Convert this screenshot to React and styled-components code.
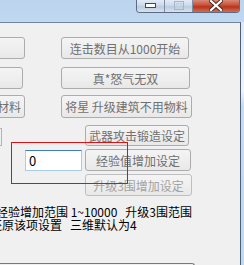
import React from 'react';
import styled, { createGlobalStyle } from 'styled-components';

const Global = createGlobalStyle`
  html, body {
    margin: 0;
    padding: 0;
    overflow: hidden;
  }
  body {
    font-family: "Noto Sans CJK SC", "Microsoft YaHei", sans-serif;
    font-size: 12px;
  }
`;

const Desktop = styled.div`
  position: relative;
  width: 244px;
  height: 265px;
  overflow: hidden;
  background: #c4dcf4;
`;

const Window = styled.div`
  display: flex;
  flex-direction: column;
  width: 364px;
  height: 300px;
  margin-left: -120px;
  background: linear-gradient(180deg, #bcd5ef 0%, #cfe3f7 40%, #c2dbf3 100%);
`;

const TitleBar = styled.div`
  display: flex;
  justify-content: flex-end;
  align-items: flex-start;
  height: 22px;
  padding-right: 4px;
  flex-shrink: 0;
`;

const Caption = styled.div`
  display: flex;
  height: 13px;
  margin-top: -1px;
  border: 1px solid #5b6c82;
  border-top: none;
  border-radius: 0 0 4px 4px;
  overflow: hidden;
`;

const CapBtn = styled.div`
  display: flex;
  align-items: center;
  justify-content: center;
  width: ${p => p.$w}px;
  height: 100%;
  background: ${p => p.$close
    ? 'linear-gradient(180deg, #dc9483 0%, #c9533d 45%, #b8341b 60%, #d06f56 100%)'
    : 'linear-gradient(180deg, #e6eef8 0%, #cfdcec 45%, #bccbde 60%, #d6e2ef 100%)'};
  border-left: ${p => (p.$first ? 'none' : '1px solid #7d8ea4')};
`;

const Frame = styled.div`
  display: flex;
  flex: 1;
`;

const Client = styled.div`
  flex: 1;
  background: #f0f0f0;
  border-top: 1px solid #71849b;
  border-right: 1px solid #4f6076;
  padding-top: 14px;
  display: flex;
  flex-direction: column;
`;

const SideFrame = styled.div`
  width: 3px;
  background: linear-gradient(180deg, #dce9f6 0%, #eef4fa 25%, #c4dcf3 30%, #bcd8f2 100%);
`;

const Row = styled.div`
  display: flex;
  align-items: center;
  height: ${p => p.$h}px;
  margin-top: ${p => p.$mt || 0}px;
`;

const LeftCell = styled.div`
  display: flex;
  justify-content: flex-end;
  align-items: center;
  width: ${p => p.$w}px;
  padding-right: ${p => p.$pr}px;
  box-sizing: border-box;
  height: 100%;
`;

const Button = styled.div`
  display: flex;
  align-items: center;
  justify-content: ${p => (p.$right ? 'flex-end' : 'center')};
  box-sizing: border-box;
  width: ${p => p.$w}px;
  height: 100%;
  padding: 0 3px;
  border: 1px solid ${p => (p.$disabled ? '#bfbfbf' : '#acacac')};
  border-radius: 3px;
  background: linear-gradient(180deg, #f4f4f4 0%, #efefef 50%, #e8e8e8 100%);
  color: ${p => (p.$disabled ? '#a3a3a3' : '#707070')};
  font-size: 12px;
  white-space: nowrap;
  overflow: hidden;
`;

const Stub = styled.div`
  width: 40px;
  height: 16px;
  border: 1px solid #b4b4b4;
  border-left: none;
  align-self: flex-end;
`;

const Input = styled.div`
  display: flex;
  align-items: center;
  box-sizing: border-box;
  width: 57px;
  height: 21px;
  padding-left: 3px;
  background: #fff;
  border: 1px solid #a9cce8;
  border-top-color: #3f7fb5;
  color: #000;
  font-size: 13px;
`;

const Notes = styled.div`
  margin-top: 9px;
  color: #000;
  font-size: 12px;
  line-height: 13px;
  white-space: nowrap;
`;

const NoteLine = styled.div`
  padding-left: ${p => p.$pl}px;
  white-space: pre;
`;

const BottomBox = styled.div`
  margin-top: 32px;
  width: 314px;
  height: 20px;
  border: 1px solid #7a7a7a;
  border-left: none;
  border-bottom: none;
  border-radius: 0 3px 0 0;
`;

const Highlight = styled.div`
  position: absolute;
  left: 11px;
  top: 142px;
  width: 115px;
  height: 40px;
  border: 1px solid #e01010;
  pointer-events: none;
`;

export default function App() {
  return (
    <>
      <Global />
      <Desktop>
        <Window>
          <TitleBar>
            <Caption>
              <CapBtn $w={27} $first>
                <svg width="11" height="5" viewBox="0 0 11 5">
                  <rect x="0.5" y="0.5" width="10" height="4" fill="#fff" stroke="#3a4a5e" />
                </svg>
              </CapBtn>
              <CapBtn $w={27}>
                <svg width="10" height="9" viewBox="0 0 10 9">
                  <rect x="0.5" y="0.5" width="9" height="8" fill="none" stroke="#a7b4c5" />
                  <rect x="2.5" y="2.5" width="5" height="4" fill="none" stroke="#c6d0dc" />
                </svg>
              </CapBtn>
              <CapBtn $w={46} $close>
                <svg width="14" height="11" viewBox="0 0 14 11">
                  <path d="M2 1 L12 10 M12 1 L2 10" stroke="#4a2a24" strokeWidth="4" strokeLinecap="square" />
                  <path d="M2 1 L12 10 M12 1 L2 10" stroke="#fff" strokeWidth="2.2" strokeLinecap="square" />
                </svg>
              </CapBtn>
            </Caption>
          </TitleBar>
          <Frame>
            <Client>
              <Row $h={22}>
                <LeftCell $w={181} $pr={36}><Button $w={130} /></LeftCell>
                <Button $w={128}>连击数目从1000开始</Button>
              </Row>
              <Row $h={22} $mt={8}>
                <LeftCell $w={181} $pr={38}><Button $w={130} /></LeftCell>
                <Button $w={129}>真*怒气无双</Button>
              </Row>
              <Row $h={23} $mt={6}>
                <LeftCell $w={181} $pr={36}><Button $w={130} $right>升级建筑不用材料</Button></LeftCell>
                <Button $w={131}>将星 升级建筑不用物料</Button>
              </Row>
              <Row $h={21} $mt={7}>
                <LeftCell $w={205} $pr={83}><Stub /></LeftCell>
                <Button $w={104}>武器攻击锻造设定</Button>
              </Row>
              <Row $h={22} $mt={3}>
                <LeftCell $w={205} $pr={3}><Input>0</Input></LeftCell>
                <Button $w={106}>经验值增加设定</Button>
              </Row>
              <Row $h={22} $mt={3}>
                <LeftCell $w={205} $pr={0} />
                <Button $w={107} $disabled>升级3围增加设定</Button>
              </Row>
              <Notes>
                <NoteLine $pl={116}>经验增加范围 1~10000   升级3围范围</NoteLine>
                <NoteLine $pl={110}>还原该项设置   三维默认为4</NoteLine>
              </Notes>
              <BottomBox />
            </Client>
            <SideFrame />
          </Frame>
        </Window>
        <Highlight />
      </Desktop>
    </>
  );
}
